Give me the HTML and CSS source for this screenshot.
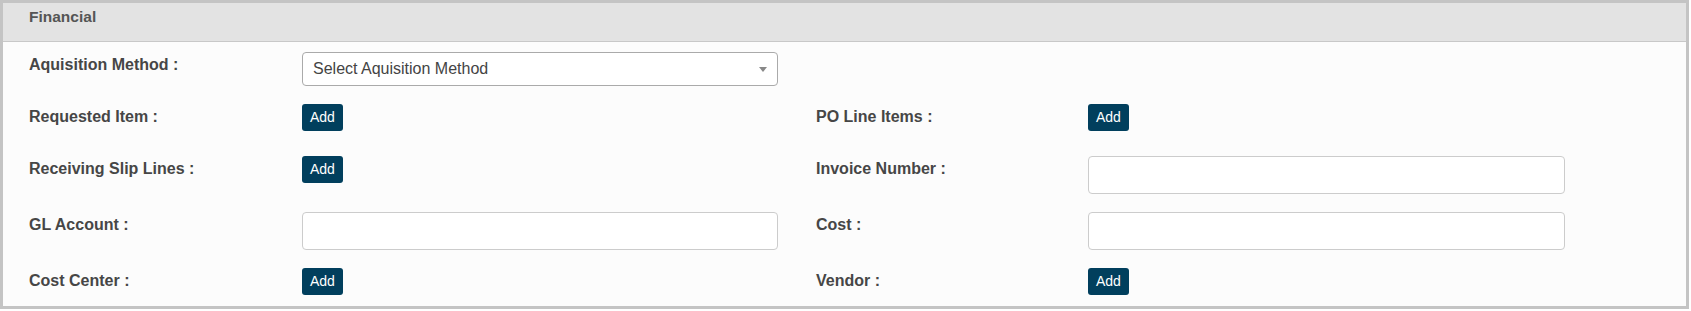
FILE: index.html
```html
<!DOCTYPE html>
<html lang="en">
<head>
    <meta charset="UTF-8">
    <meta name="viewport" content="width=device-width, initial-scale=1.0">
    <title>Financial</title>

    <link rel="stylesheet" href="styles.css">
</head>
<body>
    <div class="panel">
        <div class="panel-heading">Financial</div>

        <div class="panel-body">
            <!-- Row 1 -->
            <div class="form-row">
                <div class="field">
                    <label>Aquisition Method :</label>
                    <div class="select-box">
                        <span class="select-text">Select Aquisition Method</span>
                        <b class="select-arrow"></b>
                    </div>
                </div>
            </div>

            <!-- Row 2 -->
            <div class="form-row">
                <div class="field">
                    <label>Requested Item :</label>
                    <button class="btn-add">Add</button>
                </div>
                <div class="field">
                    <label>PO Line Items :</label>
                    <button class="btn-add">Add</button>
                </div>
            </div>

            <!-- Row 3 -->
            <div class="form-row">
                <div class="field">
                    <label>Receiving Slip Lines :</label>
                    <button class="btn-add">Add</button>
                </div>
                <div class="field">
                    <label>Invoice Number :</label>
                    <input type="text" class="text-input wide">
                </div>
            </div>

            <!-- Row 4 -->
            <div class="form-row">
                <div class="field">
                    <label>GL Account :</label>
                    <input type="text" class="text-input">
                </div>
                <div class="field">
                    <label>Cost :</label>
                    <input type="text" class="text-input wide">
                </div>
            </div>

            <!-- Row 5 -->
            <div class="form-row">
                <div class="field">
                    <label>Cost Center :</label>
                    <button class="btn-add">Add</button>
                </div>
                <div class="field">
                    <label>Vendor :</label>
                    <button class="btn-add">Add</button>
                </div>
            </div>
        </div>
    </div>
</body>
</html>
```

FILE: styles.css
```css
html, body {
    margin: 0;
    font-family: "Liberation Sans", Arial, sans-serif;
    background: #ffffff;
}

.panel {
    width: 1689px;
    box-sizing: border-box;
    border: 3px solid #c4c4c4;
    background: #fcfcfc;
}

.panel-heading {
    height: 39px;
    box-sizing: border-box;
    padding: 5px 0 0 26px;
    background: #e3e3e3;
    border-bottom: 1px solid #c8c8c8;
    font-size: 15.5px;
    line-height: 18px;
    font-weight: bold;
    color: #555;
}

.panel-body {
    display: flex;
    flex-direction: column;
    gap: 18px;
    padding: 10px 0 4px 26px;
}

.form-row {
    display: flex;
    align-items: flex-start;
    min-height: 34px;
}

.field {
    display: flex;
    align-items: flex-start;
    width: 787px;
}

.field label {
    flex: 0 0 273px;
    padding-top: 4px;
    font-size: 16px;
    line-height: 18px;
    font-weight: bold;
    color: #464646;
}

.field + .field label {
    flex-basis: 272px;
}

/* Select box, drawn like select2 */
.select-box {
    position: relative;
    width: 476px;
    height: 34px;
    box-sizing: border-box;
    border: 1px solid #aaa;
    border-radius: 4px;
    background: #fff;
    padding-left: 10px;
    display: flex;
    align-items: center;
}

.select-text {
    font-size: 16px;
    color: #444;
}

.select-arrow {
    position: absolute;
    right: 10px;
    top: 14px;
    width: 0;
    height: 0;
    border-style: solid;
    border-width: 5px 4px 0 4px;
    border-color: #888 transparent transparent transparent;
}

.text-input {
    width: 476px;
    height: 38px;
    box-sizing: border-box;
    margin: 0;
    border: 1px solid #ccc;
    border-radius: 4px;
    background: #fff;
    padding: 6px 12px;
    font-family: inherit;
    font-size: 14px;
}

.text-input.wide {
    width: 477px;
}

.btn-add {
    height: 27px;
    padding: 0 8px;
    border: none;
    border-radius: 3px;
    background-color: #013f5d;
    color: #fff;
    font-family: inherit;
    font-size: 14px;
    line-height: 27px;
    cursor: pointer;
}
```
